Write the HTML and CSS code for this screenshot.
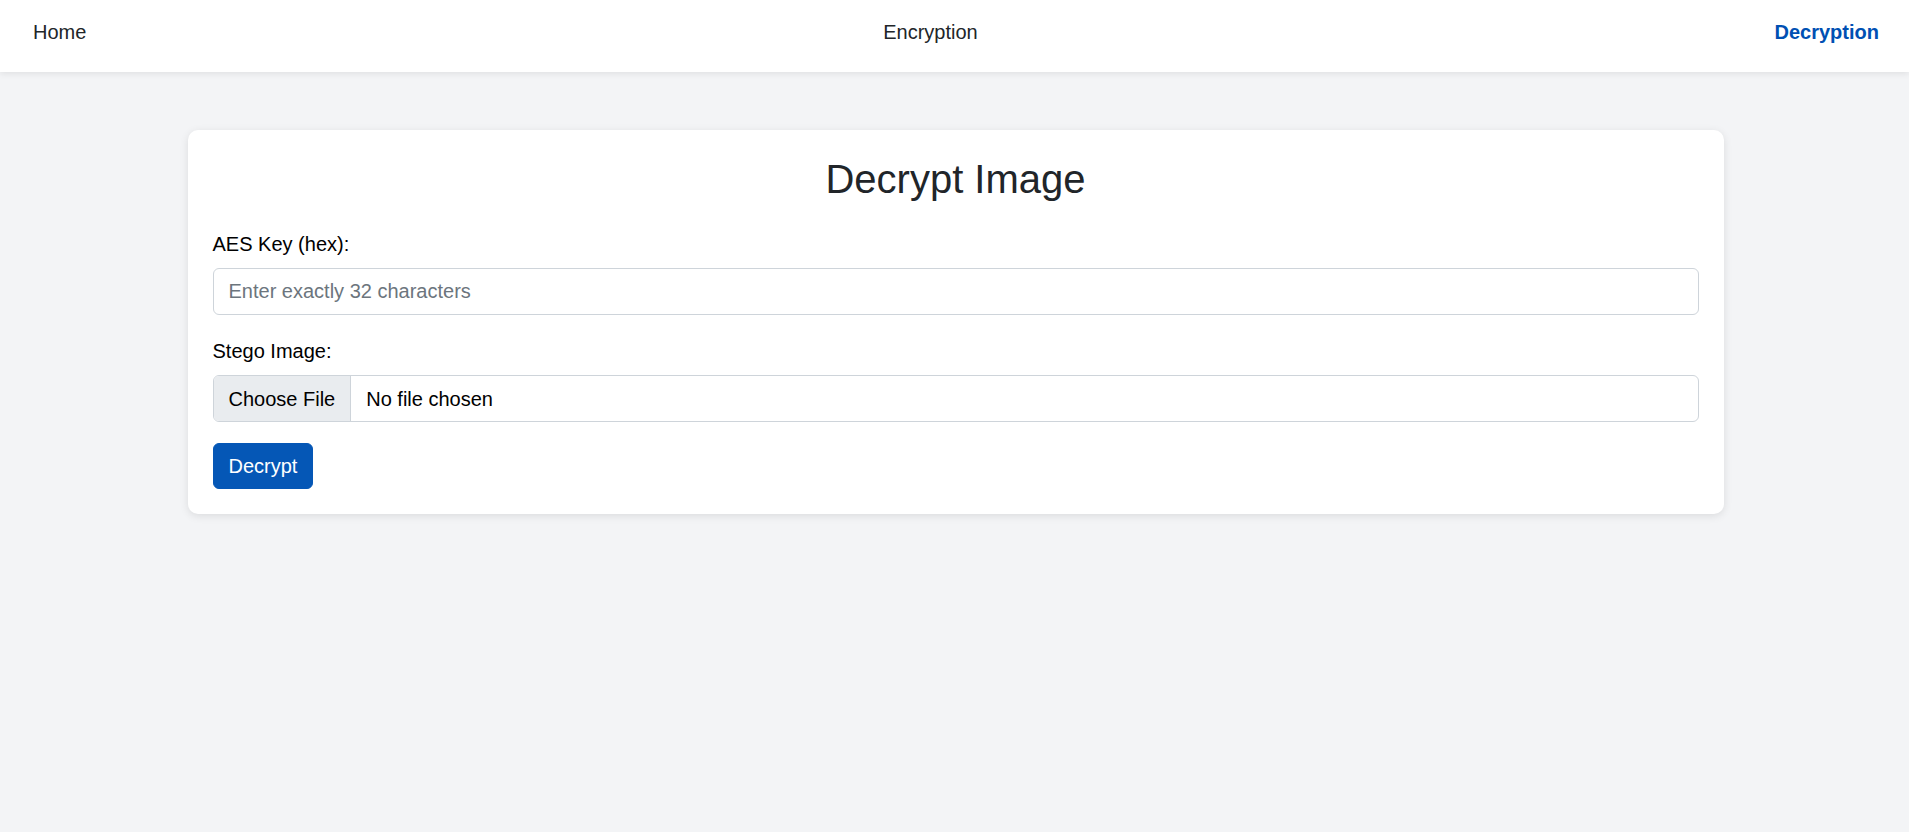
FILE: index.html
```html
<!DOCTYPE html>
<html lang="en">
<head>
<meta charset="utf-8">
<title>Decrypt Image</title>
<link rel="stylesheet" href="styles.css">
</head>
<body>
<nav class="navbar">
  <a class="nav-link" href="#">Home</a>
  <a class="nav-link" href="#">Encryption</a>
  <a class="nav-link active" href="#">Decryption</a>
</nav>
<main class="container">
  <section class="card">
    <h2 class="title">Decrypt Image</h2>
    <div class="field">
      <label class="label" for="key">AES Key (hex):</label>
      <input class="input" id="key" type="text" placeholder="Enter exactly 32 characters">
    </div>
    <div class="field">
      <label class="label">Stego Image:</label>
      <div class="file-input">
        <span class="file-btn">Choose File</span>
        <span class="file-name">No file chosen</span>
      </div>
    </div>
    <button class="btn" type="button">Decrypt</button>
  </section>
</main>
</body>
</html>
```
FILE: styles.css
```css
* { box-sizing: border-box; }
html, body { margin: 0; padding: 0; }
body {
  background: #f3f4f6;
  font-family: "Liberation Sans", Arial, sans-serif;
  font-size: 20px;
  line-height: 1.5;
  color: #212529;
  min-height: 832px;
}
.navbar {
  height: 72px;
  background: #fff;
  display: flex;
  justify-content: space-between;
  align-items: flex-start;
  padding: 21px 30px 0 33px;
  box-shadow: 0 2px 6px rgba(0,0,0,0.08);
}
.nav-link {
  font-size: 20px;
  line-height: 23px;
  color: #212529;
  text-decoration: none;
}
.nav-link.active {
  color: #0050b3;
  font-weight: 700;
}
.container {
  display: flex;
  justify-content: center;
  padding: 58px 0 0 2px;
}
.card {
  width: 1536px;
  background: #fff;
  border-radius: 10px;
  padding: 25px;
  box-shadow: 0 2px 8px rgba(0,0,0,0.1);
}
.title {
  margin: 0 0 26px;
  font-size: 40px;
  font-weight: 400;
  line-height: 48px;
  text-align: center;
  color: #212529;
}
.field { margin-bottom: 21px; }
.label {
  display: block;
  margin-bottom: 9px;
  color: #000;
}
.input {
  display: block;
  width: 100%;
  height: 47px;
  padding: 0 15px;
  font: inherit;
  color: #212529;
  border: 1px solid #ced4da;
  border-radius: 6px;
  background: #fff;
  outline: none;
}
.input::placeholder { color: #6c757d; }
.file-input {
  display: flex;
  height: 47px;
  border: 1px solid #ced4da;
  border-radius: 6px;
  overflow: hidden;
}
.file-btn {
  display: flex;
  align-items: center;
  padding: 0 15px;
  background: #e9ecef;
  border-right: 1px solid #ced4da;
  color: #000;
}
.file-name {
  display: flex;
  align-items: center;
  padding-left: 15px;
  color: #000;
}
.btn {
  display: block;
  height: 46px;
  padding: 0 15px;
  font: inherit;
  color: #fff;
  background: #0557b6;
  border: 1px solid #0557b6;
  border-radius: 6px;
  cursor: pointer;
}
```
